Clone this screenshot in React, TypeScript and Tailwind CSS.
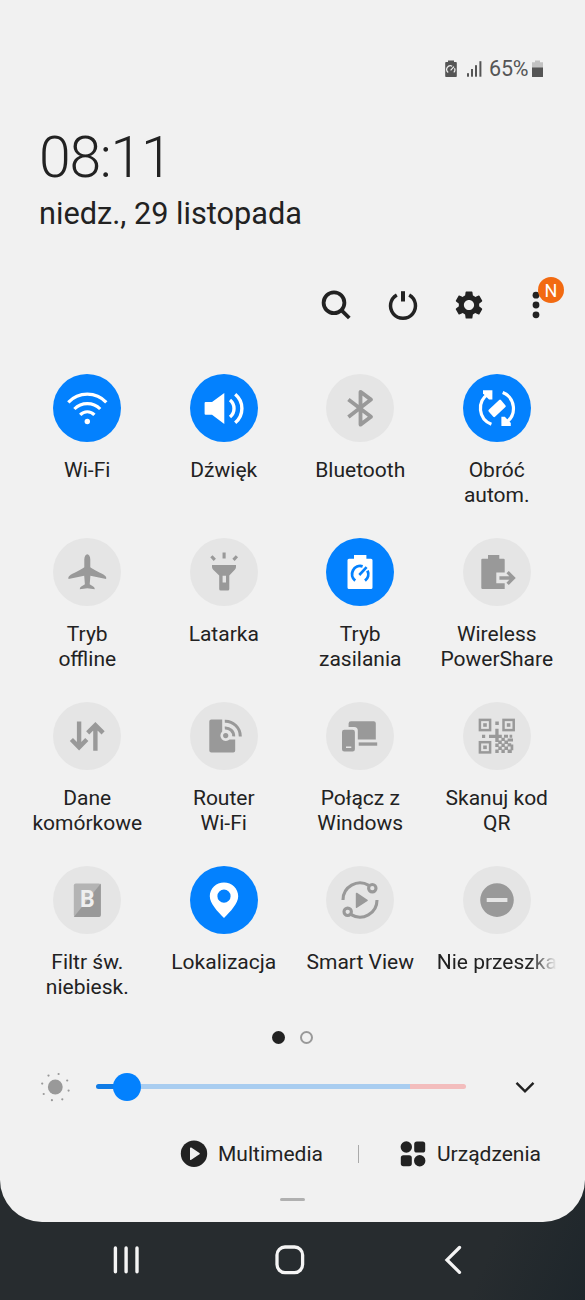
import React, { useState } from 'react';
import { MdSettings } from 'react-icons/md';

interface Tile {
  id: string;
  lines: string[];
  on?: boolean;
  fade?: boolean;
  icon: React.ReactNode;
}

const BatteryGauge = () => (
  <g fill="none" stroke="#0381fe" strokeWidth="2.9">
    <path d="M29.2 42.6 A8.2 8.2 0 0 1 36.6 28.3" />
    <path d="M41.5 32.6 A8.2 8.2 0 0 1 39 42.6" />
    <path d="M33.3 37 L40.6 29.2" strokeWidth="2.6" />
  </g>
);

// one finder square of the QR code
const Finder = ({ x, y }: { x: number; y: number }) => (
  <>
    <rect x={x + 1.3} y={y + 1.3} width="10.2" height="10.2" fill="none" stroke="currentColor" strokeWidth="2.5" />
    <rect x={x + 4.6} y={y + 4.6} width="3.6" height="3.6" />
  </>
);

const TILES: Tile[] = [
  {
    id: 'wifi',
    lines: ['Wi-Fi'],
    on: true,
    icon: (
      <>
        <g fill="none" stroke="currentColor" strokeWidth="3.2">
          <path d="M15.3 28.3 A26 26 0 0 1 53.3 28.3" />
          <path d="M21.4 35 A18 18 0 0 1 47.2 35" />
          <path d="M27.2 40.8 A9.8 9.8 0 0 1 41.4 40.8" />
        </g>
        <circle cx="34.3" cy="47.5" r="2.7" />
      </>
    ),
  },
  {
    id: 'sound',
    lines: ['Dźwięk'],
    on: true,
    icon: (
      <>
        <path d="M15.6 28 H22 L34.3 19 V50 L22 40.8 H15.6 Q14.6 40.8 14.6 39.8 V29 Q14.6 28 15.6 28 Z" />
        <g fill="none" stroke="currentColor" strokeWidth="3.4">
          <path d="M40 26 A11 11 0 0 1 40 43" />
          <path d="M45.2 20.3 A18.5 18.5 0 0 1 45.2 48.8" />
        </g>
      </>
    ),
  },
  {
    id: 'bluetooth',
    lines: ['Bluetooth'],
    icon: (
      <path
        d="M22.4 25.6 L45 42.8 L34.5 50.6 V17.8 L45 25.6 L22.4 43"
        fill="none"
        stroke="currentColor"
        strokeWidth="3.8"
        strokeLinejoin="round"
      />
    ),
  },
  {
    id: 'rotate',
    lines: ['Obróć', 'autom.'],
    on: true,
    icon: (
      <>
        <path d="M26.6 36.6 L37 26.8 L41.6 32.2 L31.2 42 Z" stroke="currentColor" strokeWidth="2.4" strokeLinejoin="round" />
        <g fill="none" stroke="currentColor" strokeWidth="3.2">
          <path d="M28.4 50.2 A17 17 0 0 1 25.2 20" />
          <path d="M39.7 18.6 A17 17 0 0 1 42.8 48.6" />
        </g>
        <path d="M20 16.3 H29.4 V25.6 L26 25.6 L20 19.4 Z" />
        <path d="M38.4 42.8 V52 H47.8 V49 L41.8 42.8 Z" />
      </>
    ),
  },
  {
    id: 'offline',
    lines: ['Tryb', 'offline'],
    icon: (
      <path d="M34.3 16.3 C36 16.3 37.3 18.6 37.3 21.5 V29.3 C39 31 50 36 52 37.7 C53.3 38.7 53.4 39.6 53.1 41 L37.4 37.7 L36.7 46.2 C38.5 48 41.6 47.8 41.8 51.3 L34.3 50.3 L26.8 51.3 C27 47.8 30.1 48 31.9 46.2 L31.2 37.7 L15.5 41 C15.2 39.6 15.3 38.7 16.6 37.7 C18.6 36 29.6 31 31.3 29.3 V21.5 C31.3 18.6 32.6 16.3 34.3 16.3 Z" />
    ),
  },
  {
    id: 'torch',
    lines: ['Latarka'],
    icon: (
      <>
        <path
          fillRule="evenodd"
          d="M22 27 H46 V29 Q46 30.4 45 31.4 L39.3 37.6 V51 Q39.3 52.5 37.8 52.5 H30.7 Q29.2 52.5 29.2 51 V37.6 L23 31.4 Q22 30.4 22 29 Z M32.6 37.7 V44.4 H36 V37.7 Z"
        />
        <path d="M34.1 14.6 V20.6 M21.4 18.2 L24.8 21.9 M46.9 18.2 L43.5 21.9" stroke="currentColor" strokeWidth="3.1" />
      </>
    ),
  },
  {
    id: 'power',
    lines: ['Tryb', 'zasilania'],
    on: true,
    icon: (
      <>
        <path d="M28 17 H40.4 V20.7 H45 Q46.5 20.7 46.5 22.2 V49.5 Q46.5 51 45 51 H23 Q21.5 51 21.5 49.5 V22.2 Q21.5 20.7 23 20.7 H28 Z" />
        <BatteryGauge />
      </>
    ),
  },
  {
    id: 'share',
    lines: ['Wireless', 'PowerShare'],
    icon: (
      <>
        <path d="M25 17 H36.3 V20.7 H40.6 Q41.7 20.7 41.7 21.8 V34.5 H33.3 V45.3 H41.7 V51 H19.5 Q18.3 51 18.3 49.8 V21.8 Q18.3 20.7 19.5 20.7 H25 Z" />
        <path d="M36.4 40 H50 M44.6 34.2 L50.4 40 L44.6 45.9" fill="none" stroke="currentColor" strokeWidth="3.3" />
      </>
    ),
  },
  {
    id: 'data',
    lines: ['Dane', 'komórkowe'],
    icon: (
      <g fill="none" stroke="currentColor" strokeWidth="4.4">
        <path d="M26.1 19.5 V45.5 M18.4 37.5 L26.1 45.3 L33.8 37.5" />
        <path d="M42.4 48.7 V23 M34.7 30.9 L42.4 23.1 L50.1 30.9" />
      </g>
    ),
  },
  {
    id: 'router',
    lines: ['Router', 'Wi-Fi'],
    icon: (
      <>
        <path d="M21.3 17.6 H32.2 V29.4 A5.4 5.4 0 0 0 39.6 37.6 H45.2 V48.5 Q45.2 50.5 43.2 50.5 H21.3 Q19.3 50.5 19.3 48.5 V19.6 Q19.3 17.6 21.3 17.6 Z" />
        <circle cx="35.7" cy="33.6" r="2.6" />
        <g fill="none" stroke="currentColor" strokeWidth="3">
          <path d="M34.8 26 A8.2 8.2 0 0 1 43.7 34.4" />
          <path d="M34.8 19.3 A15 15 0 0 1 50.3 34.4" />
        </g>
      </>
    ),
  },
  {
    id: 'windows',
    lines: ['Połącz z', 'Windows'],
    icon: (
      <>
        <path d="M25 19.2 H47.7 Q49.8 19.2 49.8 21.3 V37.4 H31.8 V28.5 Q31.8 24.9 28.2 24.9 H22.6 V21.6 Q22.6 19.2 25 19.2 Z" />
        <path
          fillRule="evenodd"
          d="M18.3 27.7 H26.6 Q28.9 27.7 28.9 30 V47.2 Q28.9 49.5 26.6 49.5 H18.3 Q16 49.5 16 47.2 V30 Q16 27.7 18.3 27.7 Z M20 44.6 V46.1 H25.3 V44.6 Z"
        />
        <rect x="32.7" y="40.4" width="18.5" height="3.3" />
      </>
    ),
  },
  {
    id: 'qr',
    lines: ['Skanuj kod', 'QR'],
    icon: (
      <>
        <Finder x={15.6} y={16.6} />
        <Finder x={39.2} y={16.6} />
        <Finder x={15.6} y={38.9} />
        <path d="M32.3 19.6h3.5v3.5h-3.5z M19 32.7h3.2v3.2h-3.2z M26 32.7h6.3v-6h3.3v6h3.2v3.2h-12.8z M41 32.7h4v3h-4z M46.6 32.7h2.6v3h-2.6z" />
        <path d="M32.3 35.9h3.4v4h-3.4z M38.4 35.7h3.4v3.4h-3.4z M44.6 36.4h5.4v3h-5.4z M35.3 38.6h3.5v3.4h-3.5z M41.4 38.6h3.6v3.4h-3.6z M32.3 41.6h3.4v3.4h-3.4z M38.4 41.6h3.4v3.4h-3.4z M44.6 41.2h3.6v3.4h-3.6z M35.3 44.6h3.5v3.4h-3.5z M41.4 44.6h3.6v3.4h-3.6z M47.6 42.6h2.7v5.6h-2.7z M32.3 47.6h3.4v3.4h-3.4z M38.4 47.6h3.4v3.4h-3.4z M44.6 47.6h4.2v3.4h-4.2z" />
      </>
    ),
  },
  {
    id: 'blue',
    lines: ['Filtr św.', 'niebiesk.'],
    icon: (
      <>
        <rect x="20.8" y="17.5" width="27" height="33.4" rx="2" fill="#b4b4b4" />
        <path d="M47.8 17.5 V48.9 Q47.8 50.9 45.8 50.9 H20.8 Z" fill="#999999" />
        <text x="34.4" y="41.3" textAnchor="middle" fill="#efefef" className="font-[Roboto] text-[23px] font-bold">
          B
        </text>
      </>
    ),
  },
  {
    id: 'location',
    lines: ['Lokalizacja'],
    on: true,
    icon: (
      <path
        fillRule="evenodd"
        d="M34 16.5 C41.9 16.5 48.2 22.6 48.2 30.3 C48.2 37.5 40.5 45.5 34 52 C27.5 45.5 19.8 37.5 19.8 30.3 C19.8 22.6 26.1 16.5 34 16.5 Z M34 23.6 A6.6 6.6 0 1 0 34 36.8 A6.6 6.6 0 1 0 34 23.6 Z"
      />
    ),
  },
  {
    id: 'smartview',
    lines: ['Smart View'],
    icon: (
      <>
        <path d="M30.6 27.5 L41 34.3 L30.6 41.2 Z" stroke="currentColor" strokeWidth="1.6" strokeLinejoin="round" />
        <g fill="none" stroke="currentColor" strokeWidth="3.1">
          <path d="M17 34 A17 17 0 0 1 42.8 19.4" />
          <path d="M51 34 A17 17 0 0 1 25.2 48.6" />
          <circle cx="46.3" cy="22.2" r="3.7" />
          <circle cx="21.7" cy="45.8" r="3.7" />
        </g>
      </>
    ),
  },
  {
    id: 'dnd',
    lines: ['Nie przeszka'],
    fade: true,
    icon: (
      <path
        fillRule="evenodd"
        d="M34 17.3 A16.8 16.8 0 1 1 34 50.9 A16.8 16.8 0 1 1 34 17.3 Z M23.7 32 V36.1 H44.4 V32 Z"
      />
    ),
  },
];

const StatusBar = () => (
  <div className="flex h-[22px] items-center justify-end pr-[42px] text-[#555555]">
    <svg width="12" height="18" viewBox="0 0 12 18" className="mr-[10px]">
      <path d="M3 0.5 H9 V2 H11 Q11.8 2 11.8 3 V16.2 Q11.8 17 11 17 H1 Q0.2 17 0.2 16.2 V3 Q0.2 2 1 2 H3 Z" fill="currentColor" />
      <path d="M3.2 12.4 A3.7 3.7 0 0 1 7.2 6.2 M9.5 8.2 A3.7 3.7 0 0 1 8.8 12.4 M5.6 10.4 L9 6.6" fill="none" stroke="#f1f1f1" strokeWidth="1.2" />
    </svg>
    <svg width="15" height="18" viewBox="0 0 15 18" className="mr-[7px] fill-current">
      <rect x="0" y="13.2" width="2" height="3.5" />
      <rect x="4" y="9" width="2" height="7.7" />
      <rect x="8" y="5.2" width="2" height="11.5" />
      <rect x="12.4" y="1.2" width="2" height="15.5" />
    </svg>
    <span className="mr-[2px] w-[41px] text-[21.5px] leading-none tracking-[-0.2px]">65%</span>
    <svg width="11" height="18" viewBox="0 0 11 18">
      <path d="M3 0.5 H8 V2.2 H11 V8 H0 V2.2 H3 Z" fill="#c2c2c2" />
      <path d="M0 7.6 H11 V16.4 Q11 17 10.4 17 H0.6 Q0 17 0 16.4 Z" fill="currentColor" />
    </svg>
  </div>
);

const Toolbar = () => (
  <div className="mt-[55px] flex h-[36px] items-center justify-end pr-[31px] text-[#222222]">
    <svg width="36" height="36" viewBox="0 0 36 36" fill="none" stroke="currentColor" strokeWidth="3.8" className="mr-[31px]">
      <circle cx="16" cy="15.8" r="10.4" />
      <path d="M23.3 23.2 L31.3 31" />
    </svg>
    <svg width="36" height="36" viewBox="0 0 36 36" fill="none" stroke="currentColor" strokeWidth="3.5" className="mr-[31px]">
      <path d="M11.8 7.9 A12.5 12.5 0 1 0 24.2 7.9" />
      <path d="M18 4.2 V14.5" strokeWidth="4" />
    </svg>
    <MdSettings size={34} className="mr-[32px]" />
    <div className="relative flex h-[36px] w-[36px] items-center justify-center">
      <svg width="36" height="36" viewBox="0 0 36 36" className="fill-current">
        <circle cx="18" cy="8.2" r="3.4" />
        <circle cx="18" cy="18" r="3.4" />
        <circle cx="18" cy="27.8" r="3.4" />
      </svg>
      <span className="absolute -top-[10px] left-[20px] flex size-[26px] items-center justify-center rounded-full bg-[#f26a11] pt-px text-[18px] leading-none text-white">
        N
      </span>
    </div>
  </div>
);

const QuickTile = ({ tile, onToggle }: { tile: Tile & { active: boolean }; onToggle: () => void }) => (
  <div className="flex h-[164px] flex-col items-center">
    <button
      onClick={onToggle}
      className={`size-[68px] shrink-0 rounded-full ${tile.active ? 'bg-[#0381fe] text-white' : 'bg-[#e5e5e5] text-[#999999]'}`}
    >
      <svg width="68" height="68" viewBox="0 0 68 68" fill="currentColor">
        {tile.icon}
      </svg>
    </button>
    <div
      className={`mt-[16.5px] text-[21px] leading-[25px] whitespace-nowrap text-[#222222] ${
        tile.fade
          ? 'w-[120px] text-left [mask-image:linear-gradient(to_right,black_78%,transparent_100%)]'
          : 'text-center'
      }`}
    >
      {tile.lines.map(line => (
        <p key={line}>{line}</p>
      ))}
    </div>
  </div>
);

const Brightness = () => (
  <div className="mt-[28.5px] flex h-[28px] items-center pl-[40px]">
    <svg width="30" height="30" viewBox="0 0 30 30" className="mr-[26px] fill-[#999999]">
      <circle cx="15.3" cy="15" r="7.4" />
      <circle cx="18.6" cy="2" r="1.1" />
      <circle cx="27.2" cy="8.5" r="1.1" />
      <circle cx="28.6" cy="18.6" r="1.1" />
      <circle cx="22.3" cy="27.3" r="1.1" />
      <circle cx="11.9" cy="28.2" r="1.1" />
      <circle cx="3.7" cy="22" r="1.1" />
      <circle cx="2.2" cy="11.6" r="1.1" />
      <circle cx="8.5" cy="3.6" r="1.1" />
    </svg>
    <div className="relative flex h-[5px] w-[370px] overflow-visible">
      <div className="w-[31px] rounded-l-full bg-[#0f7be6]" />
      <div className="w-[283px] bg-[#a9cdf0]" />
      <div className="flex-1 rounded-r-full bg-[#f3bdbd]" />
      <span className="absolute -top-[11.5px] left-[17px] size-[28px] rounded-full bg-[#0381fe]" />
    </div>
    <svg width="20" height="14" viewBox="0 0 20 14" fill="none" stroke="#222222" strokeWidth="2.4" className="ml-[48.5px]">
      <path d="M1.5 2.8 L10 11.3 L18.5 2.8" />
    </svg>
  </div>
);

const App: React.FC = () => {
  const [active, setActive] = useState<string[]>(TILES.filter(t => t.on).map(t => t.id));

  const toggle = (id: string) =>
    setActive(prev => (prev.includes(id) ? prev.filter(x => x !== id) : [...prev, id]));

  return (
    <div className="flex h-[1300px] w-[585px] flex-col overflow-hidden bg-linear-to-br from-[#272c2f] from-90% to-[#1e262b] font-[Roboto,sans-serif]">
      <div className="flex h-[1222px] shrink-0 flex-col rounded-b-[42px] bg-[#f1f1f1] pt-[58px]">
        <StatusBar />

        <div className="pl-[39px] text-[#222222]">
          <h1 className="mt-[50px] h-[56px] text-[57px] leading-[56px] font-light tracking-[-1.2px]">08:11</h1>
          <p className="mt-[10px] h-[36px] text-[30.7px] leading-[36px]">niedz., 29 listopada</p>
        </div>

        {/* szukaj, zasilanie, ustawienia, menu */}
        <Toolbar />

        <div className="mt-[50.5px] mr-[20px] ml-[19px] grid grid-cols-4">
          {TILES.map(tile => (
            <QuickTile key={tile.id} tile={{ ...tile, active: active.includes(tile.id) }} onToggle={() => toggle(tile.id)} />
          ))}
        </div>

        <div className="mt-[0.5px] flex h-[14px] items-center justify-center gap-[15px]">
          <span className="size-[13px] rounded-full bg-[#222222]" />
          <span className="size-[13px] rounded-full border-[2.4px] border-[#999999]" />
        </div>

        <Brightness />

        <div className="mt-[39.5px] flex h-[28px] items-center pl-[180px] text-[21px] text-[#222222]">
          <svg width="28" height="28" viewBox="0 0 28 28" className="mr-[10px]">
            <circle cx="14" cy="13.7" r="13.2" fill="currentColor" />
            <path d="M10.8 8.2 L19 13.7 L10.8 19.2 Z" fill="#f1f1f1" stroke="#f1f1f1" strokeWidth="1.6" strokeLinejoin="round" />
          </svg>
          <span className="w-[140px] pt-[2px]">Multimedia</span>
          <span className="h-[18px] w-px bg-[#aaaaaa]" />
          <svg width="26" height="26" viewBox="0 0 26 26" className="mr-[11px] ml-[41px] fill-current">
            <circle cx="6.3" cy="6" r="5.7" />
            <rect x="14.2" y="0.5" width="11" height="11" rx="2.6" />
            <rect x="0.8" y="14.2" width="11" height="11" rx="2.6" />
            <circle cx="19.7" cy="19.7" r="5.7" />
          </svg>
          <span className="pt-[2px]">Urządzenia</span>
        </div>

        <div className="mx-auto mt-[29.5px] h-[3px] w-[25px] rounded-full bg-[#b0b0b0]" />
      </div>

      <nav className="flex h-[78px] items-center pb-[3px] pl-[112px]">
        <svg width="28" height="30" viewBox="0 0 28 30" fill="none" stroke="#f5f5f5" strokeWidth="3.4" strokeLinecap="round">
          <path d="M3.4 3 V26.8 M14.1 3 V26.8 M25 3 V26.8" />
        </svg>
        <svg width="30" height="30" viewBox="0 0 30 30" fill="none" stroke="#f5f5f5" strokeWidth="3.3" className="ml-[135px]">
          <rect x="2" y="2" width="25.6" height="25.6" rx="8" />
        </svg>
        <svg width="18" height="30" viewBox="0 0 18 30" fill="none" stroke="#f5f5f5" strokeWidth="3.3" className="ml-[139px]">
          <path d="M15.5 2.5 L3 14.9 L15.5 27.3" strokeLinecap="round" />
        </svg>
      </nav>
    </div>
  );
};

export default App;
